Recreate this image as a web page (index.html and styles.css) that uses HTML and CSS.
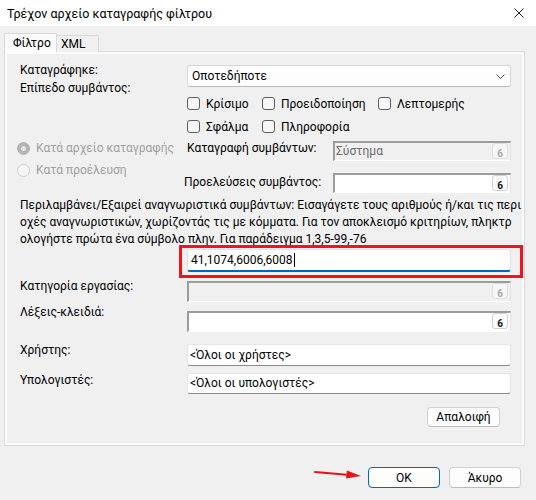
FILE: index.html
```html
<!DOCTYPE html>
<html lang="el">
<head>
<meta charset="utf-8">
<title>Τρέχον αρχείο καταγραφής φίλτρου</title>
<link rel="stylesheet" href="styles.css">
</head>
<body>
<div class="titlebar">
  <span class="title">Τρέχον αρχείο καταγραφής φίλτρου</span>
  <svg class="close" viewBox="0 0 10 10" width="10" height="10"><path d="M0.5 0.5 L9.5 9.5 M9.5 0.5 L0.5 9.5" stroke="#222" stroke-width="1" fill="none"/></svg>
</div>
<div class="tabs">
  <div class="tab active">Φίλτρο</div>
  <div class="tab xml">XML</div>
</div>
<div class="panel">
  <div class="row r1">
    <div class="lab labs">
      <div>Καταγράφηκε:</div>
      <div>Επίπεδο συμβάντος:</div>
    </div>
    <div class="ctrl">
      <div class="select"><span>Οποτεδήποτε</span><svg class="chev" viewBox="0 0 9 5" width="9" height="5"><path d="M0.5 0.5 L4.5 4.5 L8.5 0.5" stroke="#555" stroke-width="1" fill="none"/></svg></div>
      <div class="checkrow">
        <label class="chk w1"><span class="box"></span>Κρίσιμο</label>
        <label class="chk w2"><span class="box"></span>Προειδοποίηση</label>
        <label class="chk"><span class="box"></span>Λεπτομερής</label>
      </div>
      <div class="checkrow">
        <label class="chk w1"><span class="box"></span>Σφάλμα</label>
        <label class="chk w2"><span class="box"></span>Πληροφορία</label>
      </div>
    </div>
  </div>
  <div class="row r2">
    <div class="radios">
      <div class="radio"><span class="dot on"></span>Κατά αρχείο καταγραφής</div>
      <div class="radio"><span class="dot"></span>Κατά προέλευση</div>
    </div>
    <div class="ctrl">
      <div class="sub s1">
        <span class="sublab">Καταγραφή συμβάντων:</span>
        <div class="edit dis small"><span class="val">Σύστημα</span><span class="dd dis">6</span></div>
      </div>
      <div class="sub s2">
        <span class="sublab shift">Προελεύσεις συμβάντος:</span>
        <div class="edit small"><span class="val"></span><span class="dd">6</span></div>
      </div>
    </div>
  </div>
  <p class="desc">Περιλαμβάνει/Εξαιρεί αναγνωριστικά συμβάντων: Εισαγάγετε τους αριθμούς ή/και τις περι<br>οχές αναγνωριστικών, χωρίζοντάς τις με κόμματα. Για τον αποκλεισμό κριτηρίων, πληκτρ<br>ολογήστε πρώτα ένα σύμβολο πλην. Για παράδειγμα 1,3,5-99,-76</p>
  <div class="idrow">
    <div class="idinput"><span>41,1074,6006,6008</span><span class="caret"></span></div>
  </div>
  <div class="row frow cat">
    <div class="lab">Κατηγορία εργασίας:</div>
    <div class="edit dis"><span class="val"></span><span class="dd dis">6</span></div>
  </div>
  <div class="row frow kw">
    <div class="lab">Λέξεις-κλειδιά:</div>
    <div class="edit"><span class="val"></span><span class="dd">6</span></div>
  </div>
  <div class="row frow usr">
    <div class="lab">Χρήστης:</div>
    <div class="tbox tall">&lt;Όλοι οι χρήστες&gt;</div>
  </div>
  <div class="row frow cmp">
    <div class="lab">Υπολογιστές:</div>
    <div class="tbox">&lt;Όλοι οι υπολογιστές&gt;</div>
  </div>
  <div class="clearrow"><button class="btn">Απαλοιφή</button></div>
</div>
<div class="footer">
  <svg class="arrow" viewBox="0 0 48 10" width="48" height="10"><path d="M1 3 L36 6" stroke="#e8141c" stroke-width="2" fill="none" stroke-linecap="round"/><path d="M33 1.5 L47 7 L32 9.5 Z" fill="#e8141c"/></svg>
  <button class="btn ok">OK</button>
  <button class="btn">Άκυρο</button>
</div>
</body>
</html>
```
FILE: styles.css
```css
* { box-sizing: border-box; margin: 0; padding: 0; }
html, body { width: 536px; height: 500px; overflow: hidden; }
body {
  font-family: Roboto, "Noto Sans", sans-serif;
  font-size: 12px;
  color: #000;
  background: #f0f0f0;
}
.titlebar {
  height: 26px;
  background: #fff;
  display: flex;
  align-items: center;
  justify-content: space-between;
  padding: 0 12px 0 7px;
}
.title { font-size: 12.5px; }
.close { display: block; }

.tabs {
  display: flex;
  align-items: flex-end;
  margin-top: 7px;
  padding-left: 4px;
  height: 19px;
  position: relative;
  z-index: 2;
}
.tab {
  border: 1px solid #d9d9d9;
  border-bottom: none;
  font-size: 12px;
}
.tab.active {
  height: 19px;
  width: 53px;
  background: #fbfbfb;
  padding-left: 8px;
  line-height: 18px;
}
.tab.xml {
  height: 17px;
  width: 42px;
  border-left: none;
  padding-left: 4px;
  line-height: 16px;
  background: #f0f0f0;
}

.panel {
  position: relative;
  z-index: 1;
  margin: -1px 0 0 4px;
  width: 521px;
  height: 395px;
  border: 1px solid #d9d9d9;
  box-shadow: inset 0 0 0 2px #fbfbfb;
  padding: 9px 13px 0 15px;
}
.row { display: flex; align-items: flex-start; }
.lab { width: 167px; flex: none; line-height: 18px; }
.ctrl { width: 324px; }

.select {
  margin-top: 4px;
  height: 22px;
  background: #fdfdfd;
  border: 1px solid #d6d6d6;
  border-bottom-color: #bcbcbc;
  border-radius: 3px;
  display: flex;
  align-items: center;
  justify-content: space-between;
  padding: 0 5px 0 4px;
}
.chev { display: block; }

.checkrow { display: flex; height: 23px; align-items: center; }
.select + .checkrow { margin-top: 5px; }
.chk { display: flex; align-items: center; }
.chk.w1 { width: 75px; }
.chk.w2 { width: 116px; }
.box {
  width: 13px;
  height: 13px;
  border: 1px solid #5e5e5e;
  border-radius: 3px;
  background: #f6f6f6;
  margin-right: 6px;
  flex: none;
}

.radios { width: 170px; margin-left: -3px; margin-top: -1px; flex: none; }
.radio {
  height: 22px;
  display: flex;
  align-items: center;
  color: #a0a0a0;
}
.dot {
  width: 13px;
  height: 13px;
  border-radius: 50%;
  border: 1px solid #cfcfcf;
  background: #f6f6f6;
  margin-right: 6px;
  display: flex;
  align-items: center;
  justify-content: center;
}
.dot.on { background: #b4b4b4; border-color: #b4b4b4; }
.dot.on::after {
  content: "";
  width: 5px;
  height: 5px;
  border-radius: 50%;
  background: #e6e6e6;
}

.sub { display: flex; align-items: flex-start; }
.sub.s1 { margin-top: 3px; }
.sub.s2 { margin-top: 12px; }
.sublab { width: 146px; flex: none; line-height: 18px; }
.sub.s1 .sublab { margin-top: -2px; }
.sublab.shift { margin-left: -3px; width: 149px; }

.edit {
  flex: 1;
  height: 21px;
  border-style: solid;
  border-width: 2px 1px 1px 2px;
  border-color: #9c9c9c #e3e3e3 #ffffff #9c9c9c;
  background: #fff;
  display: flex;
  align-items: flex-start;
  justify-content: space-between;
  padding: 0 2px 0 1px;
}
.edit.small { height: 20px; }
.sub .edit { width: 178px; flex: none; }
.frow .edit, .frow .tbox { width: 324px; flex: none; }
.edit.dis { background: #f0f0f0; }
.edit .val { line-height: 17px; color: #6d6d6d; }
.dd {
  width: 16px;
  height: 16px;
  border: 1px solid #d0d0d0;
  border-radius: 3px;
  background: #fdfdfd;
  font-size: 10px;
  font-weight: bold;
  line-height: 19px;
  text-align: center;
  color: #111;
  overflow: hidden;
}
.dd.dis { color: #a8a8a8; background: #f6f6f6; border-color: #e0e0e0; }

.desc { margin-top: 4px; line-height: 17px; white-space: nowrap; font-size: 12px; }

.idrow { margin-left: 167px; margin-top: 1px; }
.idinput {
  position: relative;
  width: 324px;
  height: 23px;
  background: #fff;
  border: 1px solid #e3e3e3;
  border-bottom: 2px solid #0067c0;
  border-radius: 3px;
  display: flex;
  align-items: center;
  padding-left: 3px;
}
.idinput::after {
  content: "";
  position: absolute;
  left: -9px;
  top: -5px;
  right: -13px;
  bottom: -8px;
  border: 3px solid #f0141c;
}
.caret { width: 1px; height: 14px; background: #000; margin-left: 1px; }

.cat { margin-top: 9px; }
.cat .lab { margin-top: -4px; }
.kw { margin-top: 9px; }
.kw .lab { margin-top: -8px; }
.usr { margin-top: 12px; }
.usr .lab { margin-top: -3px; }
.cmp { margin-top: 7px; }
.cmp .lab { margin-top: -2px; }

.tbox {
  height: 21px;
  background: #fff;
  border: 1px solid #e6e6e6;
  border-bottom-color: #8a8a8a;
  border-radius: 3px;
  padding-left: 2px;
  line-height: 19px;
}
.tbox.tall { height: 22px; line-height: 20px; }

.clearrow { display: flex; justify-content: flex-end; margin-top: 13px; padding-right: 11px; }
.btn {
  font-family: inherit;
  font-size: 12px;
  color: #000;
  height: 21px;
  width: 72px;
  background: #fdfdfd;
  border: 1px solid #d0d0d0;
  border-bottom-color: #bcbcbc;
  border-radius: 4px;
}
.clearrow .btn { height: 20px; width: 73px; }

.footer {
  position: relative;
  display: flex;
  justify-content: flex-end;
  gap: 9px;
  margin-top: 21px;
  padding-right: 15px;
}
.btn.ok { border-color: #0067c0; }
.arrow { position: absolute; left: 314px; top: 2px; }
```
